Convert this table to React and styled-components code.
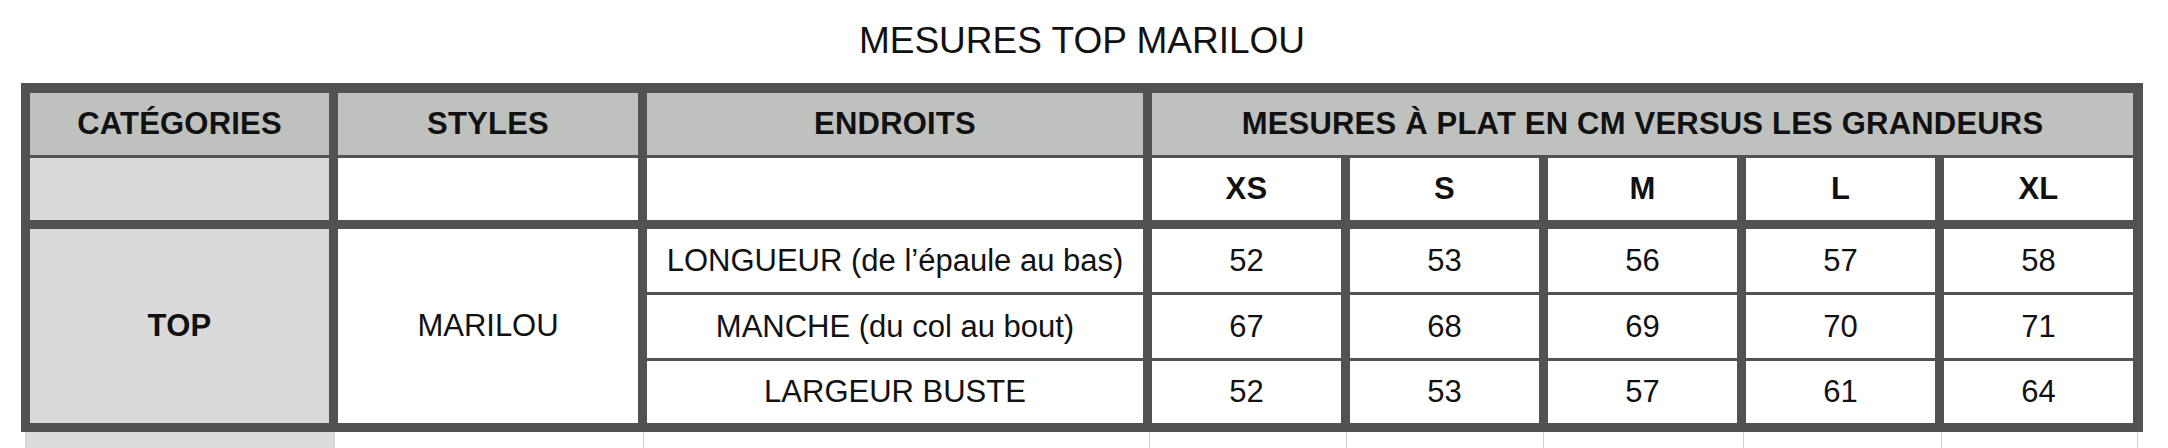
import React from 'react'
import styled, { createGlobalStyle } from 'styled-components'

const GlobalStyle = createGlobalStyle`
  html, body {
    margin: 0;
    padding: 0;
    background: #fff;
  }

  body {
    font-family: "Liberation Sans", Arial, Helvetica, sans-serif;
    color: #111;
  }
`

const BORDER = '#525252'

const Page = styled.div`
  width: 2122px;
  padding: 19px 0 0 21px;
`

const Title = styled.h1`
  margin: 0 0 20px;
  font-size: 37px;
  line-height: 44px;
  font-weight: 400;
  text-align: center;
  color: #111;
`

const Sheet = styled.div`
  display: grid;
  grid-template-columns: 299px 300px 496px repeat(5, 1fr);
  grid-template-rows: 62px 68px 63px 63px 62px;
  column-gap: 9px;
  row-gap: 3px;
  padding: 10px 10px 9px 9px;
  background: ${BORDER};
`

const Cell = styled.div`
  display: flex;
  align-items: center;
  justify-content: center;
  text-align: center;
  white-space: nowrap;
  background: ${p => (p.$head ? '#bfc1bf' : p.$shade ? '#dadada' : '#fff')};
  font-size: 31px;
  font-weight: ${p => (p.$bold ? 700 : 400)};
  letter-spacing: ${p => (p.$bold ? '0.2px' : '0')};
  grid-column: ${p => (p.$span ? `span ${p.$span}` : 'auto')};
  grid-row: ${p => (p.$rows ? `span ${p.$rows}` : 'auto')};
  border-bottom: ${p => (p.$thick ? `6px solid ${BORDER}` : 'none')};
`

const Ghost = styled.div`
  display: grid;
  grid-template-columns: 309px 309px 506px 197px 197px 200px 198px 197px;
  height: 16px;
  margin-left: 4px;
`

const GhostCell = styled.div`
  border-left: 1px solid #cfcfcf;
  background: ${p => (p.$shade ? '#dcdcdc' : '#fff')};

  &:last-child {
    border-right: 1px solid #cfcfcf;
  }
`

const sizes = ['XS', 'S', 'M', 'L', 'XL']

const rows = [
  { label: 'LONGUEUR (de l’épaule au bas)', values: [52, 53, 56, 57, 58] },
  { label: 'MANCHE (du col au bout)', values: [67, 68, 69, 70, 71] },
  { label: 'LARGEUR BUSTE', values: [52, 53, 57, 61, 64] },
]

const App = () => (
  <>
    <GlobalStyle />
    <Page>
      <Title>MESURES TOP MARILOU</Title>
      <Sheet>
        <Cell $head $bold>CATÉGORIES</Cell>
        <Cell $head $bold>STYLES</Cell>
        <Cell $head $bold>ENDROITS</Cell>
        <Cell $head $bold $span={5}>MESURES À PLAT EN CM VERSUS LES GRANDEURS</Cell>

        <Cell $shade $thick />
        <Cell $thick />
        <Cell $thick />
        {sizes.map(s => (
          <Cell key={s} $bold $thick>{s}</Cell>
        ))}

        <Cell $shade $bold $rows={3}>TOP</Cell>
        <Cell $rows={3}>MARILOU</Cell>
        {rows.map(r => (
          <React.Fragment key={r.label}>
            <Cell>{r.label}</Cell>
            {r.values.map((v, i) => (
              <Cell key={i}>{v}</Cell>
            ))}
          </React.Fragment>
        ))}
      </Sheet>
      <Ghost>
        <GhostCell $shade />
        <GhostCell />
        <GhostCell />
        <GhostCell />
        <GhostCell />
        <GhostCell />
        <GhostCell />
        <GhostCell />
      </Ghost>
    </Page>
  </>
)

export default App
